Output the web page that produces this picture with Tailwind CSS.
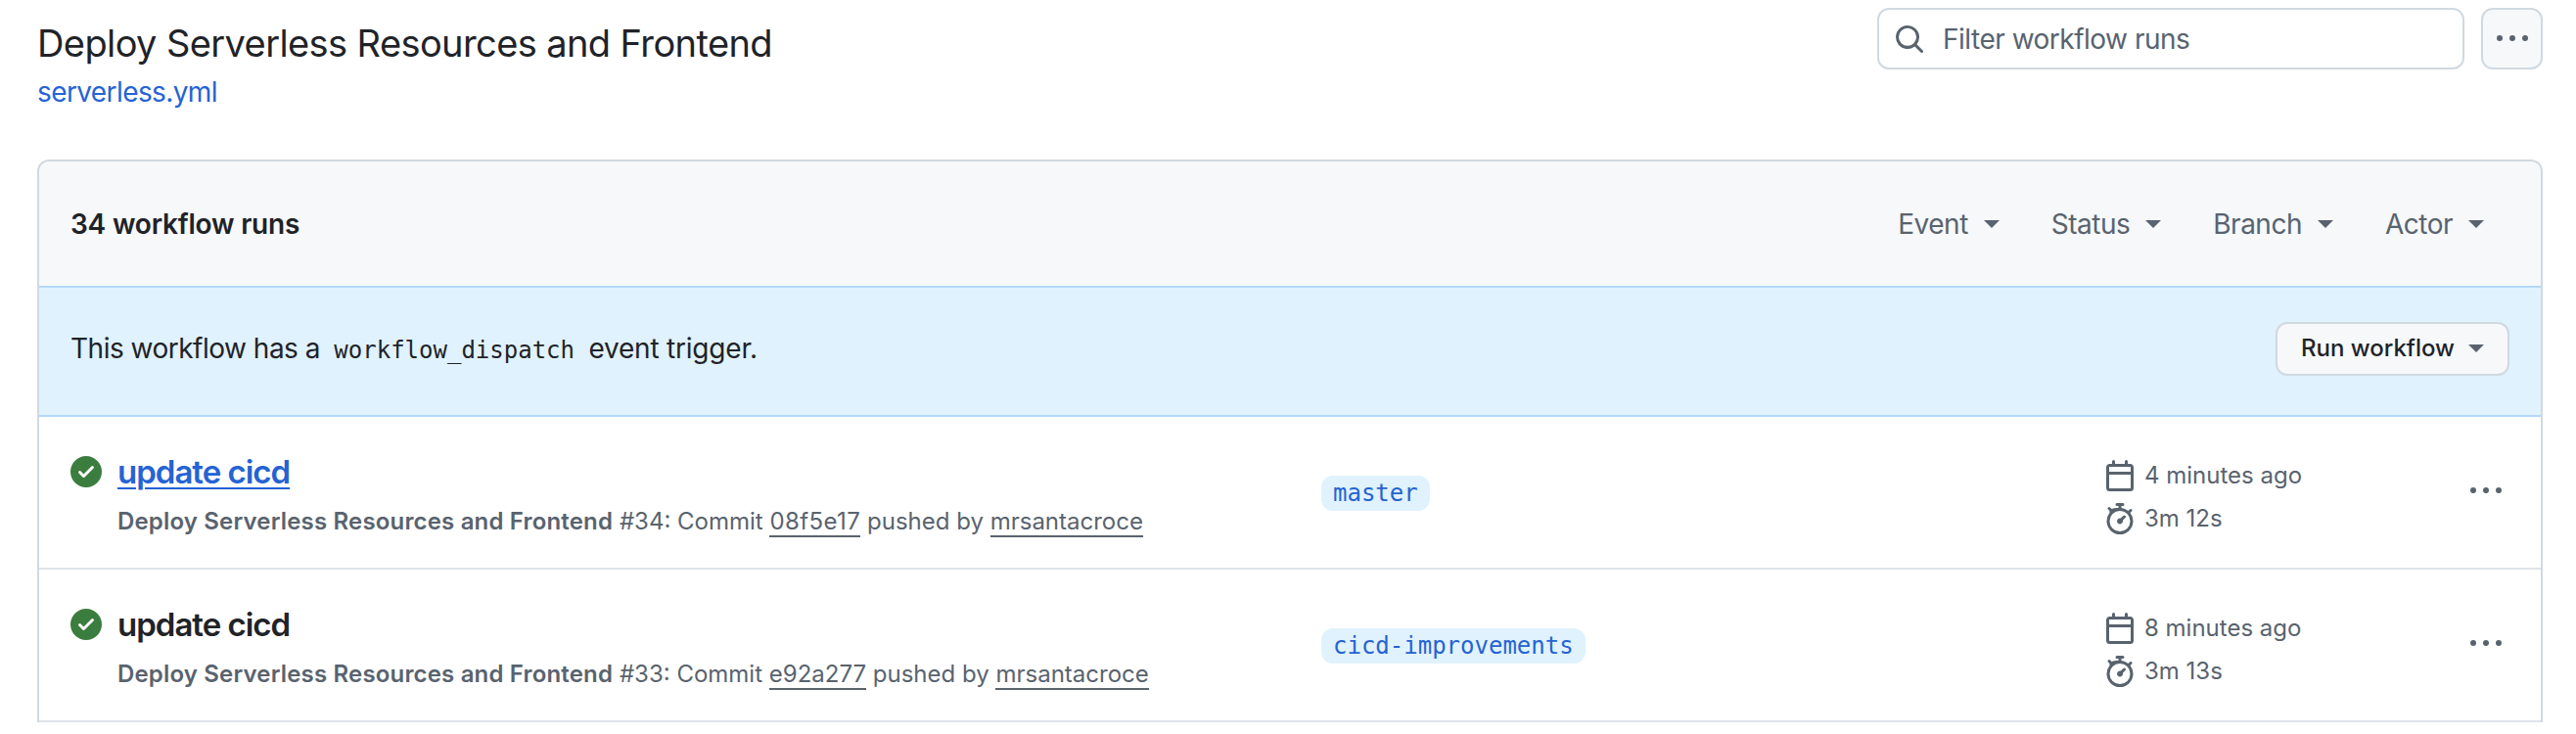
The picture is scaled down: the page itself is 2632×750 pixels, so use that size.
<!DOCTYPE html>
<html lang="en">
<head>
    <meta charset="UTF-8">
    <title>Deploy Serverless Resources and Frontend</title>
    <script src="https://cdn.jsdelivr.net/npm/@tailwindcss/browser@4"></script>
</head>
<body class="bg-white font-['Inter',sans-serif] text-[#1f2328] h-[750px] overflow-hidden">

<svg class="hidden">
    <symbol id="search" viewBox="0 0 16 16"><path d="M10.68 11.74a6 6 0 0 1-7.922-8.982 6 6 0 0 1 8.982 7.922l3.04 3.04a.749.749 0 0 1-.326 1.275.749.749 0 0 1-.734-.215ZM11.5 7a4.499 4.499 0 1 0-8.997 0A4.499 4.499 0 0 0 11.5 7Z"/></symbol>
    <symbol id="kebab" viewBox="0 0 16 16"><path d="M8 9a1.5 1.5 0 1 0 0-3 1.5 1.5 0 0 0 0 3ZM1.5 9a1.5 1.5 0 1 0 0-3 1.5 1.5 0 0 0 0 3Zm13 0a1.5 1.5 0 1 0 0-3 1.5 1.5 0 0 0 0 3Z"/></symbol>
    <symbol id="check" viewBox="0 0 16 16"><path d="M8 16A8 8 0 1 1 8 0a8 8 0 0 1 0 16Zm3.78-9.72a.751.751 0 0 0-.018-1.042.751.751 0 0 0-1.042-.018L6.75 9.19 5.28 7.72a.751.751 0 0 0-1.042.018.751.751 0 0 0-.018 1.042l2 2a.75.75 0 0 0 1.06 0Z"/></symbol>
    <symbol id="calendar" viewBox="0 0 16 16"><path d="M4.75 0a.75.75 0 0 1 .75.75V2h5V.75a.75.75 0 0 1 1.5 0V2h1.25c.966 0 1.75.784 1.75 1.75v10.5A1.75 1.75 0 0 1 13.25 16H2.75A1.75 1.75 0 0 1 1 14.25V3.75C1 2.784 1.784 2 2.75 2H4V.75A.75.75 0 0 1 4.75 0ZM2.5 7.5v6.75c0 .138.112.25.25.25h10.5a.25.25 0 0 0 .25-.25V7.5Zm10.75-4H2.75a.25.25 0 0 0-.25.25V6h11V3.75a.25.25 0 0 0-.25-.25Z"/></symbol>
    <symbol id="stopwatch" viewBox="0 0 16 16"><path d="M5.75.75A.75.75 0 0 1 6.5 0h3a.75.75 0 0 1 0 1.5h-.75v1l-.001.041a6.724 6.724 0 0 1 3.464 1.435l.007-.006.75-.75a.749.749 0 0 1 1.275.326.749.749 0 0 1-.215.734l-.75.75-.006.007a6.75 6.75 0 1 1-10.548 0L2.72 4.03l-.75-.75a.751.751 0 0 1 .018-1.042.751.751 0 0 1 1.042-.018l.75.75.007.006A6.72 6.72 0 0 1 7.25 2.541V1.5H6.5a.75.75 0 0 1-.75-.75ZM8 14.5a5.25 5.25 0 1 0-.001-10.501A5.25 5.25 0 0 0 8 14.5Zm.389-6.7 1.33-1.33a.75.75 0 1 1 1.061 1.06L9.45 8.861A1.503 1.503 0 0 1 8 10.75a1.499 1.499 0 1 1 .389-2.95Z"/></symbol>
    <symbol id="caret" viewBox="0 0 16 8"><path d="M0 0h16L8 8Z"/></symbol>
</svg>

<div class="pl-[38px] pr-[34px] pt-2">
    <!-- page header -->
    <div class="flex justify-between h-[155px]">
        <div class="pt-[12px]">
            <h1 class="text-[38px] leading-[48px] tracking-[-0.6px]">Deploy Serverless Resources and Frontend</h1>
            <a class="block text-[28px] leading-[40px] mt-[6px] tracking-[-0.6px] text-[#2563d4]">serverless.yml</a>
        </div>
        <div class="flex gap-[17px]">
            <div class="w-[600px] h-[63px] border-2 border-[#d1d9e0] rounded-xl flex items-center pl-[15px] text-[#59636e]">
                <svg class="w-8 h-8 fill-current"><use href="#search"/></svg>
                <span class="ml-[18px] text-[28px] tracking-[-0.5px]">Filter workflow runs</span>
            </div>
            <div class="w-[63px] h-[63px] border-2 border-[#d1d9e0] rounded-xl bg-[#f6f8fa] flex items-center justify-center text-[#59636e]">
                <svg class="w-8 h-8 fill-current"><use href="#kebab"/></svg>
            </div>
        </div>
    </div>

    <!-- runs box -->
    <div class="border-2 border-[#d1d9e0] border-b-0 rounded-t-xl">
        <div class="h-[127px] bg-[#f6f8fa] rounded-t-xl flex items-center justify-between pl-[32px] pr-[58px]">
            <span class="text-[28px] font-semibold tracking-[-0.2px]">34 workflow runs</span>
            <div class="flex gap-[53px] text-[28px] tracking-[-0.5px] text-[#59636e]">
                <span class="flex items-center gap-[16px]">Event <svg class="w-4 h-2 fill-current"><use href="#caret"/></svg></span>
                <span class="flex items-center gap-[16px]">Status <svg class="w-4 h-2 fill-current"><use href="#caret"/></svg></span>
                <span class="flex items-center gap-[16px]">Branch <svg class="w-4 h-2 fill-current"><use href="#caret"/></svg></span>
                <span class="flex items-center gap-[16px]">Actor <svg class="w-4 h-2 fill-current"><use href="#caret"/></svg></span>
            </div>
        </div>

        <div class="h-[134px] bg-[#e0f2fd] border-y-2 border-[#b4d8fb] flex items-center justify-between px-[32px] pb-[6px]">
            <span class="text-[28px] tracking-[-0.5px]">This workflow has a <code class="font-['DejaVu_Sans_Mono',monospace] text-[24px] tracking-normal px-[7px]">workflow_dispatch</code> <span class="tracking-[-0.2px]">event trigger.</span></span>
            <button class="w-[239px] h-[55px] bg-[#f6f8fa] border-2 border-[#d1d9e0] rounded-xl flex items-center justify-center gap-[14px] text-[24px] font-medium">Run workflow <svg class="w-[16px] h-2 fill-[#59636e]"><use href="#caret"/></svg></button>
        </div>

        <div class="h-[156px] border-b-2 border-[#dee3e8] flex items-center pl-[32px] pr-[34px] pt-[4px]">
            <div class="w-[1278px] flex shrink-0">
                <svg class="w-8 h-8 fill-[#3b7d3f] mt-[2px] shrink-0"><use href="#check"/></svg>
                <div class="ml-[16px]">
                    <a class="block text-[33px] leading-[36px] font-semibold tracking-[-1px] text-[#2563d4] underline underline-offset-4 decoration-2">update cicd</a>
                    <p class="mt-[19px] text-[24px] leading-[28px] text-[#59636e]"><b class="font-semibold tracking-[0.17px]">Deploy Serverless Resources and Frontend</b> #34: Commit <span class="border-b-2 border-[#59636e] tracking-[0.4px]">08f5e17</span> pushed by <span class="border-b-2 border-[#59636e]">mrsantacroce</span></p>
                </div>
            </div>
            <div class="w-[800px] shrink-0 mb-[2px]">
                <span class="inline-block h-9 leading-9 px-3 rounded-xl bg-[#e0f2fd] text-[#2563d4] font-['DejaVu_Sans_Mono',monospace] text-[24px]">master</span>
            </div>
            <div class="text-[24px] leading-[44px] text-[#59636e] w-[374px] shrink-0 mt-[6px]">
                <div class="flex items-center gap-[9px]"><svg class="w-8 h-8 fill-current"><use href="#calendar"/></svg>4 minutes ago</div>
                <div class="flex items-center gap-[9px]"><svg class="w-8 h-8 fill-current"><use href="#stopwatch"/></svg>3m 12s</div>
            </div>
            <svg class="w-8 h-8 fill-[#59636e] shrink-0 mb-[6px]"><use href="#kebab"/></svg>
        </div>

        <div class="h-[156px] border-b-2 border-[#dee3e8] flex items-center pl-[32px] pr-[34px] pt-[4px]">
            <div class="w-[1278px] flex shrink-0">
                <svg class="w-8 h-8 fill-[#3b7d3f] mt-[2px] shrink-0"><use href="#check"/></svg>
                <div class="ml-[16px]">
                    <a class="block text-[33px] leading-[36px] font-semibold tracking-[-1px]">update cicd</a>
                    <p class="mt-[19px] text-[24px] leading-[28px] text-[#59636e]"><b class="font-semibold tracking-[0.17px]">Deploy Serverless Resources and Frontend</b> #33: Commit <span class="border-b-2 border-[#59636e]">e92a277</span> pushed by <span class="border-b-2 border-[#59636e]">mrsantacroce</span></p>
                </div>
            </div>
            <div class="w-[800px] shrink-0 mb-[2px]">
                <span class="inline-block h-9 leading-9 px-3 rounded-xl bg-[#e0f2fd] text-[#2563d4] font-['DejaVu_Sans_Mono',monospace] text-[24px]">cicd-improvements</span>
            </div>
            <div class="text-[24px] leading-[44px] text-[#59636e] w-[374px] shrink-0 mt-[6px]">
                <div class="flex items-center gap-[9px]"><svg class="w-8 h-8 fill-current"><use href="#calendar"/></svg>8 minutes ago</div>
                <div class="flex items-center gap-[9px]"><svg class="w-8 h-8 fill-current"><use href="#stopwatch"/></svg>3m 13s</div>
            </div>
            <svg class="w-8 h-8 fill-[#59636e] shrink-0 mb-[6px]"><use href="#kebab"/></svg>
        </div>
    </div>
</div>

</body>
</html>
